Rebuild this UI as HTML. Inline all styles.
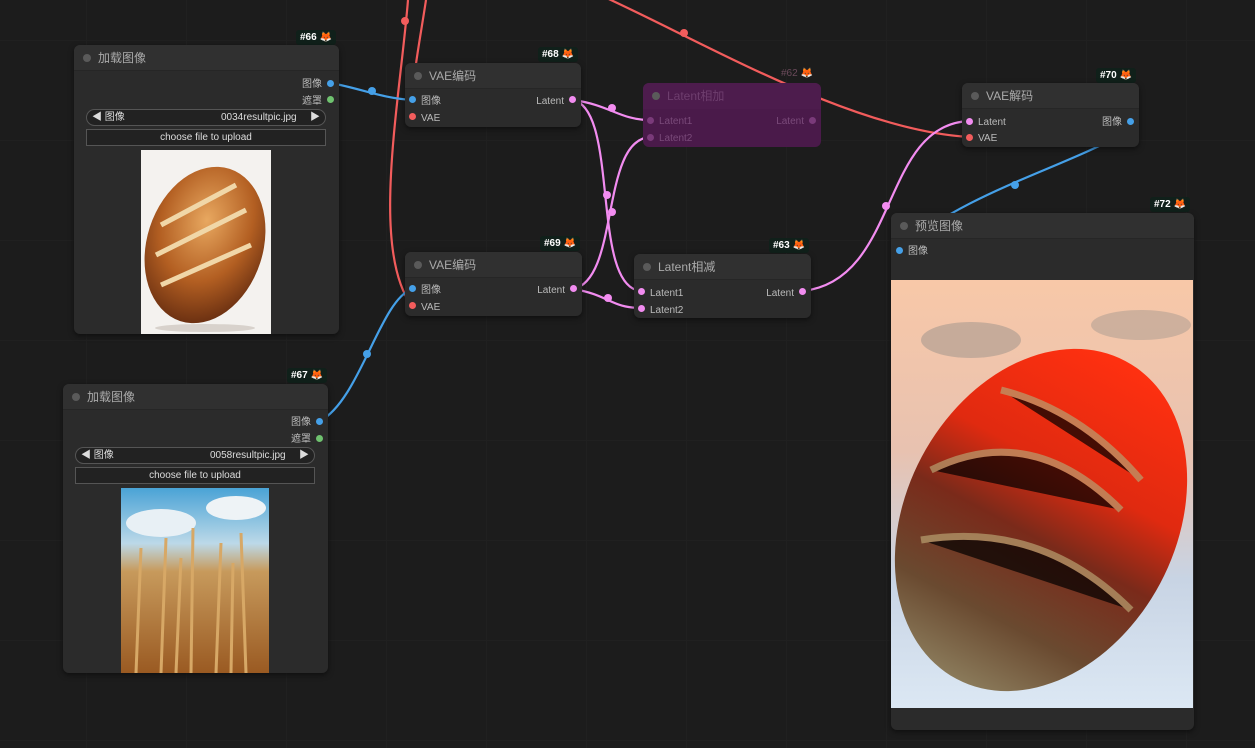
<!DOCTYPE html>
<html><head><meta charset="utf-8"><style>
*{margin:0;padding:0;box-sizing:border-box}
body{width:1255px;height:748px;overflow:hidden;background:#1c1c1c;font-family:"Liberation Sans","Noto Sans CJK SC",sans-serif;position:relative;
background-image:linear-gradient(#202020 1px,transparent 1px),linear-gradient(90deg,#202020 1px,transparent 1px);background-size:100px 100px;background-position:-14px 40px}
.node{position:absolute;background:#2b2b2b;border-radius:6px;box-shadow:0 2px 6px rgba(0,0,0,.5);color:#bbb;font-size:10px}
.title{height:26px;background:#303030;border-radius:6px 6px 0 0;border-bottom:1px solid #262626;font-size:12px;color:#aaa;line-height:26px;padding-left:24px;position:relative}
.title:before{content:"";position:absolute;left:9px;top:9px;width:8px;height:8px;border-radius:50%;background:#5a5a5a}
.badge{position:absolute;height:15px;background:#10201a;color:#fff;font-size:10px;line-height:15px;padding:0 4px;border-radius:3px;font-weight:bold}
.lbl{position:absolute;font-size:10px;color:#bbb;line-height:12px;margin-top:2px}
.dot{position:absolute;width:7px;height:7px;border-radius:50%}
.combo{position:absolute;height:17px;border:1px solid #555;border-radius:9px;background:#222;color:#ddd;font-size:10px;line-height:15px}
.btn{position:absolute;height:17px;border:1px solid #555;background:#222;color:#ddd;font-size:10px;line-height:15px;text-align:center}
</style></head><body>

<svg width="1255" height="748" style="position:absolute;left:0;top:0" fill="none">
<g stroke="#f25c5c" stroke-width="2.2">
<path d="M408 0 C400 100 370 250 412 306"/>
<path d="M426 0 C420 40 410 90 412 117"/>
<path d="M600 -5 C700 40 850 130 969 137"/>
</g>
<g stroke="#45a0e8" stroke-width="2.2">
<path d="M330 83 C360 88 380 98 412 100"/>
<path d="M320 421 C360 400 380 300 412 289"/>
<path d="M1130 130 C1060 170 970 190 898 250"/>
</g>
<g stroke="#f28cf0" stroke-width="2.2">
<path d="M573 100 C610 105 620 120 650 120"/>
<path d="M573 100 C620 110 590 290 642 291"/>
<path d="M573 289 C620 280 600 140 650 137"/>
<path d="M573 289 C610 295 610 308 642 308"/>
<path d="M803 291 C900 280 880 125 969 121"/>
</g>
<g fill="#45a0e8"><circle cx="372" cy="91" r="4"/><circle cx="367" cy="354" r="4"/><circle cx="1015" cy="185" r="4"/></g>
<g fill="#f25c5c"><circle cx="405" cy="21" r="4"/><circle cx="684" cy="33" r="4"/></g>
<g fill="#f28cf0"><circle cx="612" cy="108" r="4"/><circle cx="607" cy="195" r="4"/><circle cx="612" cy="212" r="4"/><circle cx="608" cy="298" r="4"/><circle cx="886" cy="206" r="4"/></g>
</svg>

<!-- #66 -->
<div class="badge" style="left:296px;top:30px">#66 🦊</div>
<div class="node" style="left:74px;top:45px;width:265px;height:289px">
<div class="title">加载图像</div>
<div class="lbl" style="right:17px;top:32px">图像</div><div class="dot" style="right:5px;top:35px;background:#45a0e8"></div>
<div class="lbl" style="right:17px;top:49px">遮罩</div><div class="dot" style="right:5px;top:51px;background:#6fc26f"></div>
<div class="combo" style="left:12px;top:64px;width:240px"><span style="position:absolute;left:5px">◀ 图像</span><span style="position:absolute;left:134px">0034resultpic.jpg</span><span style="position:absolute;right:5px">▶</span></div>
<div class="btn" style="left:12px;top:84px;width:240px">choose file to upload</div>
<svg style="position:absolute;left:67px;top:105px" width="130" height="184"><rect width="130" height="184" fill="#f4f2ef"/>
<defs><radialGradient id="b1" cx="45%" cy="35%" r="65%"><stop offset="0" stop-color="#e8a860"/><stop offset=".6" stop-color="#b35f22"/><stop offset="1" stop-color="#6e3212"/></radialGradient></defs>
<ellipse cx="64" cy="95" rx="58" ry="80" transform="rotate(18 64 95)" fill="url(#b1)"/>
<g stroke="#f0d7a8" stroke-width="5"><path d="M20 75 L95 35"/><path d="M15 105 L105 60"/><path d="M20 135 L110 95"/></g>
<ellipse cx="64" cy="178" rx="50" ry="4" fill="#d8d2cc"/></svg>
</div>

<!-- #67 -->
<div class="badge" style="left:287px;top:368px">#67 🦊</div>
<div class="node" style="left:63px;top:384px;width:265px;height:289px">
<div class="title">加载图像</div>
<div class="lbl" style="right:17px;top:31px">图像</div><div class="dot" style="right:5px;top:34px;background:#45a0e8"></div>
<div class="lbl" style="right:17px;top:48px">遮罩</div><div class="dot" style="right:5px;top:51px;background:#6fc26f"></div>
<div class="combo" style="left:12px;top:63px;width:240px"><span style="position:absolute;left:5px">◀ 图像</span><span style="position:absolute;left:134px">0058resultpic.jpg</span><span style="position:absolute;right:5px">▶</span></div>
<div class="btn" style="left:12px;top:83px;width:240px">choose file to upload</div>
<svg style="position:absolute;left:58px;top:104px" width="148" height="185">
<defs><linearGradient id="w1" x1="0" y1="0" x2="0" y2="1"><stop offset="0" stop-color="#4aa3d6"/><stop offset=".3" stop-color="#bcd9e8"/><stop offset=".45" stop-color="#c79a5c"/><stop offset="1" stop-color="#9a5a22"/></linearGradient></defs>
<rect width="148" height="185" fill="url(#w1)"/>
<ellipse cx="40" cy="35" rx="35" ry="14" fill="#e8f0f5"/><ellipse cx="115" cy="20" rx="30" ry="12" fill="#eef3f6"/>
<g stroke="#d7a866" stroke-width="3"><path d="M15 185 L20 60"/><path d="M40 185 L45 50"/><path d="M70 185 L72 40"/><path d="M95 185 L100 55"/><path d="M125 185 L120 45"/><path d="M55 185 L60 70"/><path d="M110 185 L112 75"/></g></svg>
</div>

<!-- #68 -->
<div class="badge" style="left:538px;top:47px">#68 🦊</div>
<div class="node" style="left:405px;top:63px;width:176px;height:64px">
<div class="title">VAE编码</div>
<div class="dot" style="left:4px;top:33px;background:#45a0e8"></div><div class="lbl" style="left:16px;top:31px">图像</div>
<div class="dot" style="left:4px;top:50px;background:#f25c5c"></div><div class="lbl" style="left:16px;top:48px">VAE</div>
<div class="lbl" style="right:17px;top:31px">Latent</div><div class="dot" style="right:5px;top:33px;background:#f28cf0"></div>
</div>

<!-- #69 -->
<div class="badge" style="left:540px;top:236px">#69 🦊</div>
<div class="node" style="left:405px;top:252px;width:177px;height:64px">
<div class="title">VAE编码</div>
<div class="dot" style="left:4px;top:33px;background:#45a0e8"></div><div class="lbl" style="left:16px;top:31px">图像</div>
<div class="dot" style="left:4px;top:50px;background:#f25c5c"></div><div class="lbl" style="left:16px;top:48px">VAE</div>
<div class="lbl" style="right:17px;top:31px">Latent</div><div class="dot" style="right:5px;top:33px;background:#f28cf0"></div>
</div>

<!-- #62 -->
<div class="lbl" style="left:781px;top:66px;color:#6a4a5a">#62 🦊</div>
<div class="node" style="left:643px;top:83px;width:178px;height:64px;background:#4a1a4a;box-shadow:none;color:#7a4a7a">
<div class="title" style="background:#4d1c4d;border-bottom:none;color:#6e3e6e">Latent相加</div>
<div class="dot" style="left:4px;top:34px;background:#7a3a7a"></div><div class="lbl" style="left:16px;top:31px;color:#7a4a7a">Latent1</div>
<div class="dot" style="left:4px;top:51px;background:#7a3a7a"></div><div class="lbl" style="left:16px;top:48px;color:#7a4a7a">Latent2</div>
<div class="lbl" style="right:17px;top:31px;color:#7a4a7a">Latent</div><div class="dot" style="right:5px;top:34px;background:#7a3a7a"></div>
</div>

<!-- #63 -->
<div class="badge" style="left:769px;top:238px">#63 🦊</div>
<div class="node" style="left:634px;top:254px;width:177px;height:64px">
<div class="title">Latent相减</div>
<div class="dot" style="left:4px;top:34px;background:#f28cf0"></div><div class="lbl" style="left:16px;top:32px">Latent1</div>
<div class="dot" style="left:4px;top:51px;background:#f28cf0"></div><div class="lbl" style="left:16px;top:49px">Latent2</div>
<div class="lbl" style="right:17px;top:32px">Latent</div><div class="dot" style="right:5px;top:34px;background:#f28cf0"></div>
</div>

<!-- #70 -->
<div class="badge" style="left:1096px;top:68px">#70 🦊</div>
<div class="node" style="left:962px;top:83px;width:177px;height:64px">
<div class="title">VAE解码</div>
<div class="dot" style="left:4px;top:35px;background:#f28cf0"></div><div class="lbl" style="left:16px;top:32px">Latent</div>
<div class="dot" style="left:4px;top:51px;background:#f25c5c"></div><div class="lbl" style="left:16px;top:48px">VAE</div>
<div class="lbl" style="right:17px;top:32px">图像</div><div class="dot" style="right:5px;top:35px;background:#45a0e8"></div>
</div>

<!-- #72 -->
<div class="badge" style="left:1150px;top:197px">#72 🦊</div>
<div class="node" style="left:891px;top:213px;width:303px;height:517px">
<div class="title">预览图像</div>
<div class="dot" style="left:5px;top:34px;background:#45a0e8"></div><div class="lbl" style="left:17px;top:31px">图像</div>
<svg style="position:absolute;left:0;top:67px" width="302" height="428">
<defs>
<linearGradient id="bg2" x1="0" y1="0" x2="0" y2="1"><stop offset="0" stop-color="#f8c8a8"/><stop offset=".4" stop-color="#e8c2b0"/><stop offset=".7" stop-color="#c8d4e4"/><stop offset="1" stop-color="#dce8f4"/></linearGradient>
<linearGradient id="eg" x1="0" y1="0" x2="0" y2="1"><stop offset="0" stop-color="#ff3010"/><stop offset=".35" stop-color="#e02a10"/><stop offset=".55" stop-color="#7a2a1a"/><stop offset=".8" stop-color="#6a4a30"/><stop offset="1" stop-color="#8a7a5a"/></linearGradient>
</defs>
<rect width="302" height="428" fill="url(#bg2)"/>
<ellipse cx="80" cy="60" rx="50" ry="18" fill="#a89a90" opacity=".6"/><ellipse cx="250" cy="45" rx="50" ry="15" fill="#a89a90" opacity=".5"/>
<ellipse cx="150" cy="240" rx="135" ry="180" transform="rotate(28 150 240)" fill="url(#eg)"/>
<g stroke="#b8a070" stroke-width="7" opacity=".7"><path d="M40 190 Q140 140 230 230"/><path d="M30 260 Q150 240 240 330"/><path d="M110 110 Q190 130 250 200"/></g>
</svg>
</div>

</body></html>
